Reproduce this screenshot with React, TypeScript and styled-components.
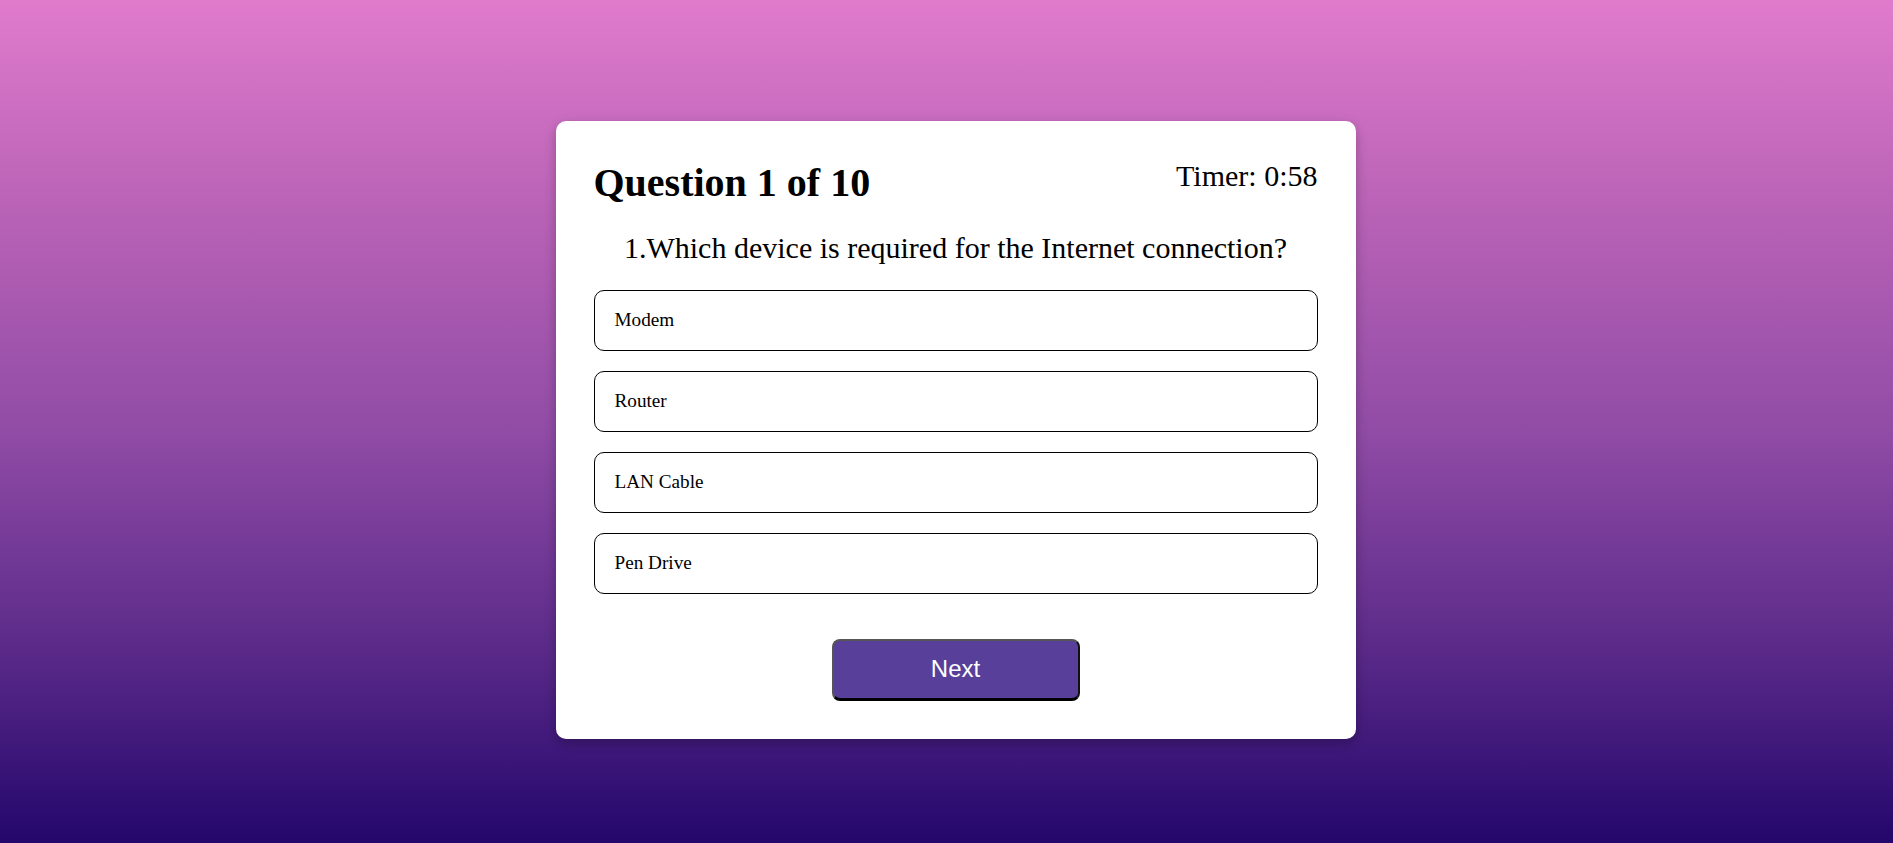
import React, { useState } from "react";
import styled, { createGlobalStyle } from "styled-components";

const GlobalStyle = createGlobalStyle`
  html {
    min-height: 100%;
    overflow: hidden;
    background: linear-gradient(to bottom, #e07bcc 0%, #b862b6 25%, #914ca6 50%, #5c2b8a 75%, #1f0469 100%);
  }
  body {
    margin: 8px;
    overflow: hidden;
    font-family: "Liberation Serif", "Times New Roman", serif;
  }
`;

const Page = styled.div`
  width: 100vw;
  height: 100vh;
  padding-left: 1px;
  display: flex;
  align-items: center;
  justify-content: center;
`;

const Card = styled.div`
  width: 800px;
  box-sizing: border-box;
  padding: 38px;
  background: #fff;
  border-radius: 10px;
  box-shadow: 0 4px 12px rgba(0, 0, 0, 0.25);
  display: flex;
  flex-direction: column;
`;

const Header = styled.div`
  display: flex;
  justify-content: space-between;
  align-items: flex-start;
`;

const Title = styled.h1`
  margin: 0;
  font-size: 40px;
  font-weight: bold;
  color: #000;
`;

const Timer = styled.div`
  font-size: 30px;
  color: #000;
`;

const QuestionText = styled.h2`
  margin: 25px 0 25px;
  font-size: 30px;
  font-weight: normal;
  text-align: center;
  color: #000;
`;

const Options = styled.div`
  display: flex;
  flex-direction: column;
  gap: 20px;
`;

const Option = styled.div<{ $selected?: boolean }>`
  border: 1px solid #000;
  border-radius: 10px;
  padding: 18.5px 20px;
  font-size: 19.2px;
  color: #000;
  background: ${(p) => (p.$selected ? "#ece6f7" : "#fff")};
  cursor: pointer;
`;

const NextButton = styled.button`
  align-self: center;
  margin-top: 45px;
  width: 248px;
  height: 62px;
  box-sizing: border-box;
  background: #583f99;
  color: #fff;
  font-family: "Liberation Sans", Arial, sans-serif;
  font-size: 24px;
  border-style: solid;
  border-width: 2px 2px 3px 2px;
  border-color: #555 #111 #000 #555;
  border-radius: 8px;
  cursor: pointer;
`;

const options = ["Modem", "Router", "LAN Cable", "Pen Drive"];

const App = () => {
  const [selected, setSelected] = useState<number | null>(null);

  return (
    <>
      <GlobalStyle />
      <Page>
        <Card>
          <Header>
            <Title>Question 1 of 10</Title>
            <Timer>Timer: 0:58</Timer>
          </Header>
          <QuestionText>1.Which device is required for the Internet connection?</QuestionText>
          <Options>
            {options.map((o, i) => (
              <Option key={o} $selected={selected === i} onClick={() => setSelected(i)}>
                {o}
              </Option>
            ))}
          </Options>
          <NextButton>Next</NextButton>
        </Card>
      </Page>
    </>
  );
};

export default App;
